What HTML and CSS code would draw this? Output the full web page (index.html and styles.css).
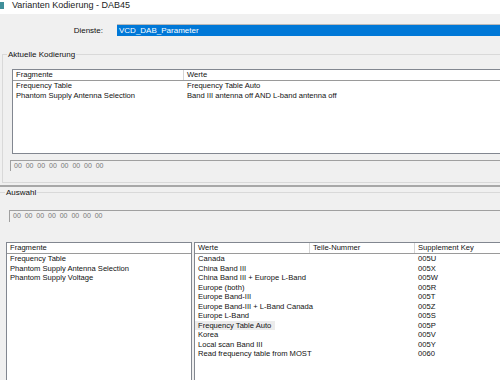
FILE: index.html
```html
<!DOCTYPE html>
<html lang="de">
<head>
  <meta charset="UTF-8">
  <title>Varianten Kodierung - DAB45</title>
  <link rel="stylesheet" href="styles.css">
</head>
<body>

<div class="titlebar"><span class="app-icon"></span>Varianten Kodierung - DAB45</div>

<div class="dienste">
  <label class="dienste-label">Dienste:</label>
  <div class="dienste-box">VCD_DAB_Parameter</div>
</div>

<section class="group group-top">
  <div class="group-title">Aktuelle Kodierung</div>
  <div class="list list-aktuell">
    <div class="list-head cols-2"><span>Fragmente</span><span>Werte</span></div>
    <div class="row cols-2"><span>Frequency Table</span><span>Frequency Table Auto</span></div>
    <div class="row cols-2"><span>Phantom Supply Antenna Selection</span><span>Band III antenna off AND L-band antenna off</span></div>
  </div>
  <div class="hex">00&nbsp;&nbsp;00&nbsp;&nbsp;00&nbsp;&nbsp;00&nbsp;&nbsp;00&nbsp;&nbsp;00&nbsp;&nbsp;00&nbsp;&nbsp;00</div>
</section>

<div class="splitter"></div>

<section class="group group-bottom">
  <div class="group-title">Auswahl</div>
  <div class="hex">00&nbsp;&nbsp;00&nbsp;&nbsp;00&nbsp;&nbsp;00&nbsp;&nbsp;00&nbsp;&nbsp;00&nbsp;&nbsp;00&nbsp;&nbsp;00</div>

  <div class="lists">
    <div class="list list-fragmente">
      <div class="list-head"><span>Fragmente</span></div>
      <div class="row"><span>Frequency Table</span></div>
      <div class="row"><span>Phantom Supply Antenna Selection</span></div>
      <div class="row"><span>Phantom Supply Voltage</span></div>
    </div>

    <div class="list list-werte">
      <div class="list-head cols-3"><span>Werte</span><span>Teile-Nummer</span><span>Supplement Key</span></div>
      <div class="row cols-3"><span>Canada</span><span></span><span>005U</span></div>
      <div class="row cols-3"><span>China Band III</span><span></span><span>005X</span></div>
      <div class="row cols-3"><span>China Band III + Europe L-Band</span><span></span><span>005W</span></div>
      <div class="row cols-3"><span>Europe (both)</span><span></span><span>005R</span></div>
      <div class="row cols-3"><span>Europe Band-III</span><span></span><span>005T</span></div>
      <div class="row cols-3"><span>Europe Band-III + L-Band Canada</span><span></span><span>005Z</span></div>
      <div class="row cols-3"><span>Europe L-Band</span><span></span><span>005S</span></div>
      <div class="row cols-3"><span class="hover">Frequency Table Auto</span><span></span><span>005P</span></div>
      <div class="row cols-3"><span>Korea</span><span></span><span>005V</span></div>
      <div class="row cols-3"><span>Local scan Band III</span><span></span><span>005Y</span></div>
      <div class="row cols-3"><span>Read frequency table from MOST</span><span></span><span>0060</span></div>
    </div>
  </div>
</section>

</body>
</html>
```

FILE: styles.css
```css
body {
  margin: 0;
  width: 500px;
  height: 380px;
  overflow: hidden;
  background: #f0f0f0;
  font-family: "Liberation Sans", Arial, sans-serif;
  font-size: 7.6px;
  color: #111;
}

.titlebar {
  height: 14px;
  line-height: 11px;
  background: white;
  padding-left: 12px;
  font-size: 9px;
  color: #222;
  display: flex;
}

.app-icon {
  width: 4px;
  height: 7px;
  background: #3f8f9a;
  margin: 2px 8px 0 -12px;
}

.dienste {
  display: flex;
  align-items: center;
  padding-top: 10px;
}

.dienste-label {
  width: 103px;
  text-align: right;
  font-size: 8px;
  margin-right: 14px;
}

.dienste-box {
  flex: 1;
  height: 11px;
  line-height: 11px;
  background: #0078d7;
  color: white;
  border-top: 1px solid #b9b9b9;
  padding-left: 2px;
  font-size: 8px;
}

.group {
  padding-left: 7px;
  border-top: 1px solid #d9d9d9;
}

.group-title {
  display: table;
  margin: -5px 0 0 -3px;
  padding: 0 1px;
  background: #f0f0f0;
  font-size: 8px;
  line-height: 9px;
}

.group-top {
  box-sizing: border-box;
  margin: 18px 0 0 2px;
  height: 129px;
  border-left: 1px solid #d9d9d9;
  border-bottom: 1px solid #d9d9d9;
}

.group-bottom {
  margin-top: 5px;
  padding-left: 6px;
}

.group-bottom .group-title {
  margin-left: -1px;
}

.splitter {
  height: 2px;
  margin-top: 2px;
  background: #a8a8a8;
}

.list {
  background: white;
  border: 1px solid #828790;
  border-right: none;
  overflow: hidden;
}

.list-aktuell {
  margin: 10px -20px 0 2px;
  height: 83px;
}

.list-head {
  height: 10px;
  line-height: 10px;
  border-bottom: 1px solid #9a9a9a;
  display: grid;
}

.list-head span {
  padding-left: 3px;
  border-right: 1px solid #d5d5d5;
}

.list-head span:last-child {
  border-right: none;
}

.list-fragmente .list-head span {
  border-right: none;
}

.row {
  height: 9.5px;
  line-height: 9.5px;
  display: grid;
}

.row span {
  padding-left: 3px;
  white-space: nowrap;
}

.cols-2 {
  grid-template-columns: 171px 1fr;
}

.cols-3 {
  grid-template-columns: 115px 105px 1fr;
}

.hex {
  margin: 6px -20px 0 0;
  height: 10px;
  line-height: 10px;
  padding-left: 3px;
  border-top: 1px solid #a0a0a0;
  border-left: 1px solid #a0a0a0;
  color: #777;
  font-size: 7px;
}

.group-bottom .hex {
  margin: 13px 0 0 3px;
  height: 11px;
}

.lists {
  display: flex;
  gap: 2px;
  margin-top: 20px;
}

.list-fragmente {
  width: 184px;
  height: 137px;
  border-right: 1px solid #828790;
  border-bottom: none;
}

.list-werte {
  flex: 1;
  height: 137px;
  border-bottom: none;
}

.hover {
  background: #ececec;
  justify-self: start;
  padding-right: 4px;
}
```
